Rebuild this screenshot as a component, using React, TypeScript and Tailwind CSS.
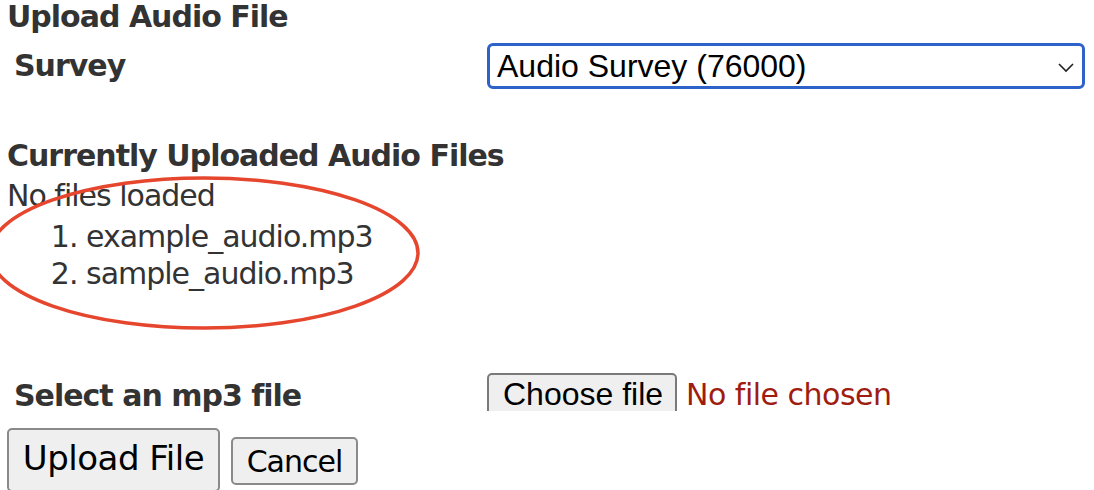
import React from "react";

const tahoma = { fontFamily: '"DejaVu Sans", Verdana, sans-serif' };
const arial = { fontFamily: '"Liberation Sans", Arial, sans-serif' };

const App: React.FC = () => {
  return (
    <div className="relative w-[1094px] h-[490px] overflow-hidden bg-white text-[#333]" style={tahoma}>
      {/* circled annotation */}
      <svg className="absolute left-0 top-0 pointer-events-none" width="1094" height="490">
        <ellipse cx="204" cy="253" rx="214" ry="75" fill="none" stroke="#e5462d" strokeWidth="3.5" />
      </svg>

      <h1 className="pl-[7px] text-[30px] font-bold leading-[34px] tracking-[-1px]">Upload Audio File</h1>

      <div className="flex items-center mt-[9px] h-[46px]">
        <div className="w-[487px] pl-[14px] text-[30px] font-bold leading-[34px] tracking-[-1px]">Survey</div>
        <div className="relative w-[598px] h-[46px] rounded-[6px] border-[3px] border-[#2d62c8] flex items-center pl-[7px]">
          <span className="text-[32px] text-black leading-[36px]" style={arial}>
            Audio Survey (76000)
          </span>
          <svg className="absolute right-[8px] top-[15px]" width="16" height="12" viewBox="0 0 16 12">
            <path d="M1 3 L8 10 L15 3" fill="none" stroke="#222" strokeWidth="1.6" />
          </svg>
        </div>
      </div>

      <h2 className="mt-[50px] pl-[7px] text-[30px] font-bold leading-[34px] tracking-[-1px]">
        Currently Uploaded Audio Files
      </h2>
      <div className="mt-[5px] pl-[7px] text-[30px] leading-[36px] tracking-[-1px]">No files loaded</div>
      <ol className="mt-[4px] pl-[86px] text-[30px] leading-[37px] tracking-[-1px] list-decimal">
        <li>example_audio.mp3</li>
        <li>sample_audio.mp3</li>
      </ol>

      <div className="flex items-start mt-[81px] h-[38px]">
        <div className="w-[487px] pl-[14px] pt-[5px] text-[30px] font-bold leading-[35px] tracking-[-1px]">
          Select an mp3 file
        </div>
        {/* file input, bottom edge clipped like the source */}
        <div className="flex items-start h-[38px] overflow-hidden">
          <div
            className="w-[190px] h-[46px] pt-[3px] pl-[14px] rounded-[5px] border-2 border-[#7a7a7a] bg-[#efefef] text-black text-[32px] leading-[33px]"
            style={arial}
          >
            Choose file
          </div>
          <span className="ml-[9px] pt-[5px] text-[30px] leading-[33px] text-[#a11c10] tracking-[-0.5px]">
            No file chosen
          </span>
        </div>
      </div>

      <div className="flex items-start gap-[11px] mt-[17px] pl-[7px]">
        <button className="h-[64px] w-[213px] pt-[8px] rounded-[5px] border-2 border-[#8a8a8a] bg-[#efefef] text-black text-[34px] leading-[40px] tracking-[-0.5px] flex justify-center items-start">
          Upload File
        </button>
        <button className="mt-[9px] h-[48px] w-[127px] pt-[5px] rounded-[5px] border-2 border-[#8a8a8a] bg-[#efefef] text-black text-[30px] leading-[36px] tracking-[-1px] flex justify-center items-start">
          Cancel
        </button>
      </div>
    </div>
  );
};

export default App;
